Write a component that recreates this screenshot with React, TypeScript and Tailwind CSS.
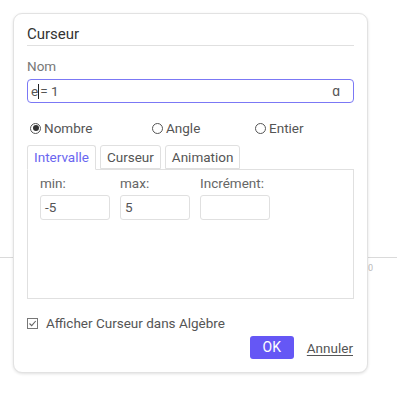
import React from "react";

function Radio({ checked, label }: { checked?: boolean; label: string }) {
  return (
    <label className="flex items-center gap-[3px] text-[13.5px] text-[#555]">
      <span className="w-[11px] h-[11px] rounded-full border border-[#555] flex items-center justify-center">
        {checked && <span className="w-[6px] h-[6px] rounded-full bg-[#333]" />}
      </span>
      {label}
    </label>
  );
}

export default function App() {
  const fields = [
    { label: "min:", value: "-5" },
    { label: "max:", value: "5" },
    { label: "Incrément:", value: "" }
  ];

  return (
    <div className="relative w-[397px] h-[400px] bg-white overflow-hidden" style={{ fontFamily: "Roboto, 'Liberation Sans', sans-serif" }}>
      {/* background graphics line */}
      <div className="absolute left-0 right-0 top-[257px] h-px bg-[#dadada]" />
      <div className="absolute left-[368px] top-[262px] text-[9px] text-[#bbb]">0</div>

      {/* dialog */}
      <div className="absolute left-[13px] top-[13px] w-[355px] h-[360px] bg-white rounded-[9px] border border-[#e2e2e2] shadow-[0_1px_3px_rgba(0,0,0,0.12)] px-[13px] pt-[10px]">
        <div className="text-[15px] text-[#333] leading-[20px] pb-[1px] border-b border-[#e0e0e0]">Curseur</div>

        <div className="mt-[11px] text-[13.5px] text-[#777] leading-[18px]">Nom</div>
        <div className="mt-[4px] h-[24px] rounded-[4px] border border-[#7b78f5] flex items-center px-[3px] text-[13.5px] text-[#555]">
          <span>e</span>
          <span className="w-px h-[15px] bg-[#222]" />
          <span className="ml-[1px]">= 1</span>
          <span className="ml-auto mr-[10px] text-[14px] text-[#555]">ɑ</span>
        </div>

        <div className="mt-[16px] flex items-center pl-[3px] h-[18px]">
          <div className="w-[122px]"><Radio checked label="Nombre" /></div>
          <div className="w-[103px]"><Radio label="Angle" /></div>
          <Radio label="Entier" />
        </div>

        <div className="mt-[8px] flex gap-[4px] h-[24px] items-end">
          <div className="h-[25px] -mb-px px-[6px] border border-[#e0e0e0] border-b-white bg-white rounded-t-[3px] text-[13.5px] text-[#6a66f0] flex items-center z-10">Intervalle</div>
          <div className="h-[24px] px-[6px] border border-[#e0e0e0] rounded-t-[3px] text-[13.5px] text-[#555] flex items-center">Curseur</div>
          <div className="h-[24px] px-[6px] border border-[#e0e0e0] rounded-t-[3px] text-[13.5px] text-[#555] flex items-center">Animation</div>
        </div>
        <div className="h-[130px] border border-[#e0e0e0] pl-[12px] pt-[4px] flex gap-[10px]">
          {fields.map((f) => (
            <div key={f.label} className="flex flex-col">
              <div className="text-[13.5px] text-[#666] leading-[18px]">{f.label}</div>
              <div className="mt-[3px] w-[70px] h-[25px] rounded-[3px] border border-[#e0e0e0] px-[4px] flex items-center text-[13.5px] text-[#555]">{f.value}</div>
            </div>
          ))}
        </div>

        <div className="mt-[14px] flex items-center gap-[8px]">
          <span className="w-[11px] h-[11px] border border-[#777] flex items-center justify-center">
            <svg width="9" height="9" viewBox="0 0 9 9" fill="none">
              <path d="M1.5 4.5 L3.7 6.7 L7.7 2" stroke="#666" strokeWidth="1.1" />
            </svg>
          </span>
          <span className="text-[13.5px] text-[#555]">Afficher Curseur dans Algèbre</span>
        </div>

        <div className="mt-[3px] flex justify-end items-center gap-[13px] pr-px">
          <button className="w-[44px] h-[23px] rounded-[3px] bg-[#6557f5] text-white text-[14px]">OK</button>
          <button className="text-[13.5px] text-[#555] underline underline-offset-2">Annuler</button>
        </div>
      </div>
    </div>
  );
}
